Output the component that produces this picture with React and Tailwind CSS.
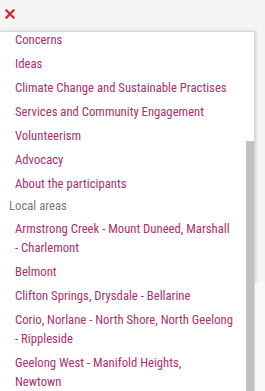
const topics = [
  'Concerns',
  'Ideas',
  'Climate Change and Sustainable Practises',
  'Services and Community Engagement',
  'Volunteerism',
  'Advocacy',
  'About the participants',
];

// lines are split where the list wraps them
const areas = [
  ['Armstrong Creek - Mount Duneed, Marshall', '- Charlemont'],
  ['Belmont'],
  ['Clifton Springs, Drysdale - Bellarine'],
  ['Corio, Norlane - North Shore, North Geelong', '- Rippleside'],
  ['Geelong West - Manifold Heights,', 'Newtown'],
];

const Option = ({ lines }) => (
  <li className="pl-[15px] pr-[8px] py-[2.5px] text-[12.7px] leading-[19px] text-[#ab306d] cursor-pointer">
    {lines.map((l, i) => (
      <span key={i} className="block whitespace-nowrap">
        {l}
      </span>
    ))}
  </li>
);

export default function App() {
  return (
    <div
      className="w-[265px] h-[391px] overflow-hidden bg-[#f5f5f5] flex flex-col"
      style={{ fontFamily: '"Roboto Condensed", "Liberation Sans", sans-serif' }}
    >
      {/* close bar */}
      <div className="h-[31px] shrink-0 flex items-center pl-[5px]">
        <svg width="10" height="10" viewBox="0 0 10 10" className="mt-[-4px]">
          <path d="M1.5 1.5 L8.5 8.5 M8.5 1.5 L1.5 8.5" stroke="#d32f2f" strokeWidth="2.4" strokeLinecap="square" />
        </svg>
      </div>

      <div className="flex flex-1 min-h-0">
        <div className="w-[255px] flex bg-white border-t border-r border-[#d6d6d6] shadow-[1px_0_3px_rgba(0,0,0,0.15)] overflow-hidden">
          <div className="flex-1 min-w-0 overflow-hidden">
            <ul className="mt-[-5px]">
              {topics.map((t) => (
                <Option key={t} lines={[t]} />
              ))}
              <li className="px-[9px] pt-[1px] text-[12.7px] leading-[20px] text-[#7a7a7a]">Local areas</li>
              {areas.map((a) => (
                <Option key={a[0]} lines={a} />
              ))}
            </ul>
          </div>
          {/* scrollbar */}
          <div className="w-[8px] shrink-0 flex flex-col">
            <div className="h-[109px]" />
            <div className="flex-1 bg-[#c1c1c1]" />
          </div>
        </div>
        <div className="flex-1 flex flex-col">
          <div className="h-[252px]" />
          <div className="flex-1 bg-[#f8f8fa]" />
        </div>
      </div>
    </div>
  );
}
